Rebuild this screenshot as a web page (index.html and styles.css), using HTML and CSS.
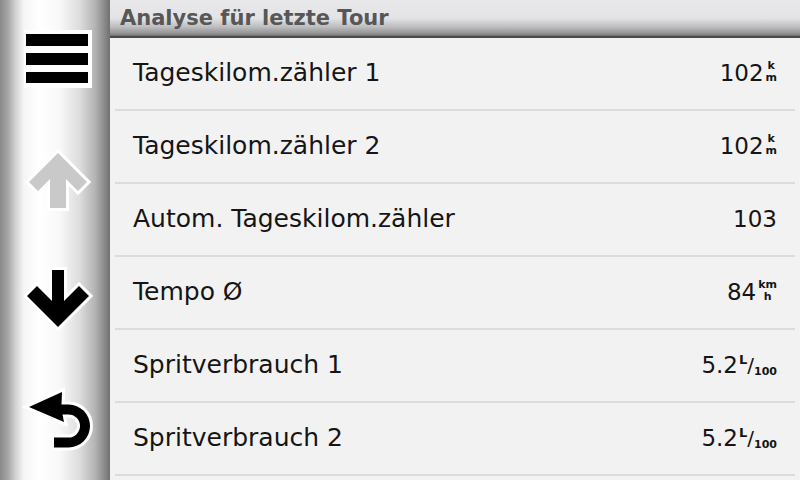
FILE: index.html
```html
<!DOCTYPE html>
<html>
<head>
<meta charset="utf-8">
<link rel="stylesheet" href="styles.css">
</head>
<body>
<div class="screen">
  <aside class="sidebar">
    <div class="btn menu">
      <svg width="70" height="60" viewBox="0 0 70 60">
        <rect x="1" y="0" width="68" height="58" fill="#fff"/>
        <rect x="3" y="4" width="62" height="12" fill="#000"/>
        <rect x="3" y="23" width="62" height="12" fill="#000"/>
        <rect x="3" y="42" width="62" height="11" fill="#000"/>
      </svg>
    </div>
    <div class="btn">
      <svg width="70" height="70" viewBox="0 0 70 70">
        <path class="ico up" d="M35 8 L64 37 L55 46 L43 34 L43 63 L27 63 L27 34 L15 46 L6 37 Z"/>
      </svg>
    </div>
    <div class="btn">
      <svg width="70" height="70" viewBox="0 0 70 70">
        <path class="ico" d="M29 6 L41 6 L41 37 L56 22 L66 32 L35 63 L4 32 L14 22 L29 37 Z"/>
      </svg>
    </div>
    <div class="btn">
      <svg width="70" height="70" viewBox="0 0 70 70">
        <path class="ico" d="M6 24 L39 9 L38.5 21.5 L45.5 21.5 A21.5 21.5 0 0 1 45.5 64.5 L31 64.5 L31 54.5 L45.5 54.5 A11.5 11.5 0 0 0 45.5 31.5 L39.5 31.5 L41 39 Z"/>
      </svg>
    </div>
  </aside>
  <main class="content">
    <header class="title">Analyse für letzte Tour</header>
    <ul class="list">
      <li class="row"><span class="label">Tageskilom.zähler 1</span><span class="value">102<span class="unit stack"><span>k</span><span>m</span></span></span></li>
      <li class="row"><span class="label">Tageskilom.zähler 2</span><span class="value">102<span class="unit stack"><span>k</span><span>m</span></span></span></li>
      <li class="row"><span class="label">Autom. Tageskilom.zähler</span><span class="value">103</span></li>
      <li class="row"><span class="label">Tempo Ø</span><span class="value">84<span class="unit stack"><span>km</span><span>h</span></span></span></li>
      <li class="row"><span class="label">Spritverbrauch 1</span><span class="value">5.2<span class="unit frac"><span class="num">L</span><span class="sl">/</span><span class="den">100</span></span></span></li>
      <li class="row"><span class="label">Spritverbrauch 2</span><span class="value">5.2<span class="unit frac"><span class="num">L</span><span class="sl">/</span><span class="den">100</span></span></span></li>
    </ul>
  </main>
</div>
</body>
</html>
```
FILE: styles.css
```css
* { box-sizing: border-box; }
html, body {
  margin: 0;
  padding: 0;
  width: 800px;
  height: 480px;
  overflow: hidden;
  font-family: "DejaVu Sans", "Liberation Sans", sans-serif;
}
.screen {
  display: flex;
  width: 800px;
  height: 480px;
  background: #f3f2f3;
}
.sidebar {
  width: 110px;
  flex: none;
  display: flex;
  flex-direction: column;
  align-items: center;
  padding: 30px 0 0 0;
  overflow: hidden;
  background: linear-gradient(to right,
    #8a8a8a 0px, #a6a6a6 8px, #d4d4d4 16px, #f6f6f6 24px, #ffffff 40px,
    #f8f8f8 60px, #dcdcdc 80px, #b4b4b4 95px, #8c8c8c 104px, #707070 110px);
}
.btn {
  flex: none;
  width: 70px;
  height: 119px;
  display: flex;
  justify-content: center;
  align-items: flex-start;
  margin-left: 5px;
}
.btn.menu { height: 115px; }
.btn svg { display: block; overflow: visible; }
.ico {
  fill: #000;
  stroke: #fff;
  stroke-width: 6;
  stroke-linejoin: miter;
  paint-order: stroke;
}
.ico.up { fill: #c8c9c8; }
.content {
  flex: 1;
  display: flex;
  flex-direction: column;
}
.title {
  height: 38px;
  flex: none;
  padding: 6px 0 0 10px;
  font-weight: bold;
  font-size: 21px;
  line-height: 24px;
  color: #575757;
  background: linear-gradient(to bottom, #e8e8ea 0px, #e4e4e6 18px, #bdbdbf 27px, #8e8e90 34px, #6a6a6c 36px, #4a4a4a 36px, #4a4a4a 38px);
}
.list {
  list-style: none;
  margin: 0 5px;
  padding: 0;
}
.row {
  height: 73px;
  display: flex;
  align-items: center;
  justify-content: space-between;
  padding: 0 18px 2px 18px;
  border-bottom: 2px solid #dcdcdc;
  color: #151515;
}
.label { font-size: 25px; }
.value {
  display: flex;
  align-items: center;
  font-size: 23px;
}
.unit {
  font-size: 11px;
  font-weight: bold;
  line-height: 12px;
  margin-left: 2px;
}
.stack {
  display: inline-flex;
  flex-direction: column;
  align-items: center;
  transform: translateY(-1px);
}
.frac {
  display: inline-flex;
  align-items: center;
  height: 24px;
  margin-left: 1px;
}
.frac .num { align-self: flex-start; font-size: 13px; margin-top: 1px; }
.frac .sl { font-size: 20px; font-weight: normal; line-height: 22px; }
.frac .den { align-self: flex-end; font-size: 11px; margin-bottom: -1px; }
```
